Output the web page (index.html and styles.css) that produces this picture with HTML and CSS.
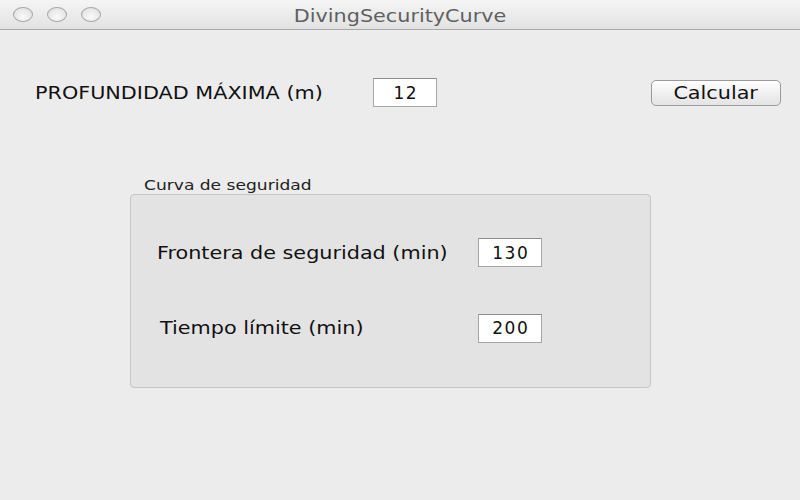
FILE: index.html
```html
<!DOCTYPE html>
<html lang="es">
<head>
  <meta charset="UTF-8" />
  <title>DivingSecurityCurve</title>
  <link rel="stylesheet" href="styles.css">
</head>
<body>
  <div class="window">
    <div class="titlebar">
      <div class="lights">
        <span class="light"></span>
        <span class="light"></span>
        <span class="light"></span>
      </div>
      <div class="title"><span class="wide mid">DivingSecurityCurve</span></div>
    </div>

    <div class="content">
      <div class="top-row">
        <label class="big-label" for="depth"><span class="wide">PROFUNDIDAD MÁXIMA (m)</span></label>
        <input class="field" id="depth" type="text" value="12" />
        <span></span>
        <button class="btn"><span class="wide mid">Calcular</span></button>
      </div>

      <div class="group">
        <div class="group-title"><span class="wide">Curva de seguridad</span></div>
        <div class="group-box">
          <label class="big-label" for="border"><span class="wide">Frontera de seguridad (min)</span></label>
          <input class="field" id="border" type="text" value="130" />
          <label class="big-label shift" for="limit"><span class="wide">Tiempo límite (min)</span></label>
          <input class="field" id="limit" type="text" value="200" />
        </div>
      </div>
    </div>
  </div>
</body>
</html>
```

FILE: styles.css
```css
body {
  margin: 0;
  font-family: "DejaVu Sans", "Liberation Sans", sans-serif;
  background: #ececec;
}
.window {
  width: 800px;
  height: 500px;
  background: #ececec;
  overflow: hidden;
}
/* the screenshot is stretched sideways, so text is too */
.wide {
  display: inline-block;
  transform: scaleX(1.22);
  transform-origin: left center;
}
.wide.mid {
  transform-origin: center center;
}
.titlebar {
  position: relative;
  height: 29px;
  background: linear-gradient(#f5f5f5, #e2e2e2);
  border-bottom: 1px solid #a9a9a9;
}
.lights {
  display: flex;
  gap: 14px;
  padding: 7px 0 0 13px;
}
.light {
  width: 18px;
  height: 13px;
  border: 1px solid #a8a8a8;
  border-radius: 50%;
  background: radial-gradient(circle at 50% 70%, #fafafa, #dcdcdc);
}
.title {
  position: absolute;
  left: 0;
  right: 0;
  top: 6px;
  text-align: center;
  font-size: 17px;
  color: #606060;
}
.content {
  padding-top: 48px;
}
.top-row {
  display: grid;
  grid-template-columns: 338px 64px 1fr 130px;
  align-items: center;
  padding: 0 19px 0 35px;
  height: 29px;
}
.big-label {
  font-size: 17px;
  color: #111;
}
.field {
  box-sizing: border-box;
  width: 64px;
  height: 29px;
  border: 1px solid #a6a6a6;
  border-top-color: #8c8c8c;
  background: #fff;
  font-family: inherit;
  font-size: 17px;
  letter-spacing: 1.5px;
  text-indent: 1.5px;
  color: #111;
  text-align: center;
  padding: 0;
}
.btn {
  height: 26px;
  border: 1px solid #9a9a9a;
  border-radius: 5px;
  background: linear-gradient(#ffffff, #f0f0f0 50%, #e4e4e4);
  font-family: inherit;
  font-size: 17px;
  color: #111;
  padding: 0;
}
.group {
  margin: 69px 0 0 130px;
  width: 521px;
}
.group-title {
  font-size: 14px;
  line-height: 18px;
  color: #222;
  padding-left: 14px;
}
.group-box {
  box-sizing: border-box;
  height: 194px;
  border: 1px solid #c6c6c6;
  border-radius: 4px;
  background: #e3e3e3;
  display: grid;
  grid-template-columns: 321px 64px;
  grid-template-rows: 29px 28px;
  row-gap: 47px;
  align-items: center;
  padding: 43px 0 0 26px;
}
.shift {
  padding-left: 3px;
}
```
